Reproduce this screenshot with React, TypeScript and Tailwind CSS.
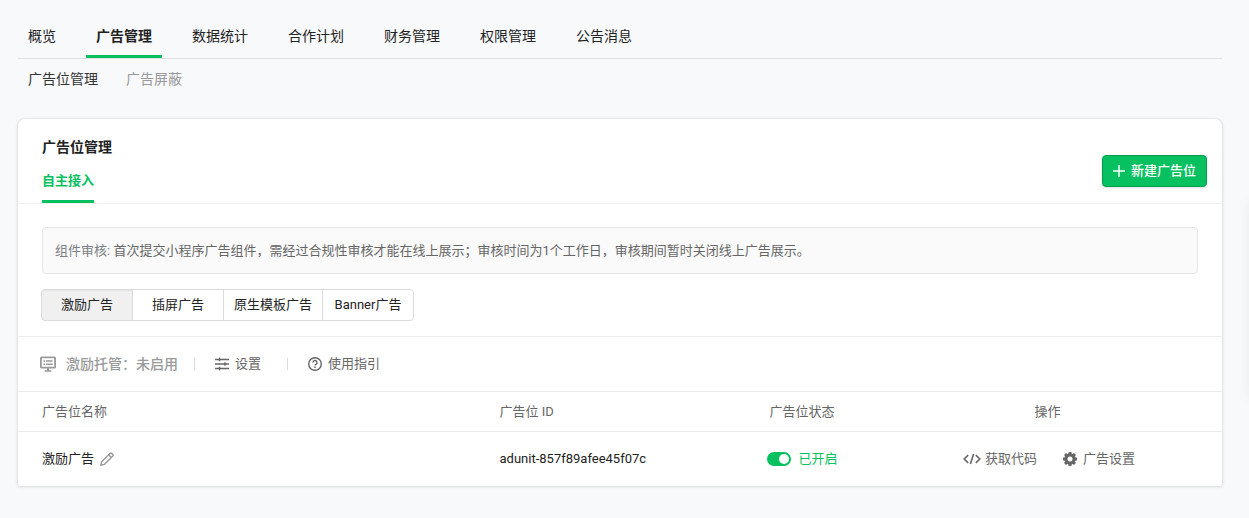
import React, { useState } from 'react';
import clsx from 'clsx';

const mainTabs = ['概览', '广告管理', '数据统计', '合作计划', '财务管理', '权限管理', '公告消息'];
const subTabs = ['广告位管理', '广告屏蔽'];
const adTypes = ['激励广告', '插屏广告', '原生模板广告', 'Banner广告'];

interface AdUnit {
  name: string;
  id: string;
  enabled: boolean;
}

const adUnits: AdUnit[] = [{ name: '激励广告', id: 'adunit-857f89afee45f07c', enabled: true }];

const PlusIcon = () => (
  <svg width="12" height="12" viewBox="0 0 12 12" fill="none" stroke="currentColor" strokeWidth="1.5" aria-hidden="true">
    <path d="M6 0v12M0 6h12" />
  </svg>
);

const BoardIcon = () => (
  <svg width="16" height="16" viewBox="0 0 16 16" fill="none" stroke="currentColor" strokeWidth="1.5" aria-hidden="true">
    <rect x="0.9" y="1.4" width="14.2" height="10.2" rx="0.6" strokeWidth="1.8" />
    <path d="M3.4 5h1.6M6 5h6.6M3.4 8.2h1.6M6 8.2h6.6M4.6 15h6.8" />
    <path d="M8 12v3" strokeWidth="2" />
  </svg>
);

const SlidersIcon = () => (
  <svg width="14" height="14" viewBox="0 0 14 14" fill="none" stroke="currentColor" strokeWidth="1.4" aria-hidden="true">
    <path d="M0 2.5h14M0 7h14M0 11.5h14M4.5 0.7v3.6M10 5.2v3.6M4.5 9.7v3.6" />
  </svg>
);

const HelpIcon = () => (
  <svg width="14" height="14" viewBox="0 0 14 14" fill="none" stroke="currentColor" strokeWidth="1.4" aria-hidden="true">
    <circle cx="7" cy="7" r="6.3" />
    <path d="M5 5.6a2 2 0 1 1 2.9 1.7c-.6.35-.9.6-.9 1.3" />
    <path d="M7 9.5v1.4" />
  </svg>
);

const PencilIcon = () => (
  <svg width="14" height="14" viewBox="0 0 14 14" fill="none" stroke="currentColor" strokeWidth="1.4" strokeLinejoin="round" aria-hidden="true">
    <path d="M0.8 13.2l.8-3.5 8.5-8.5q.7-.7 1.4 0l1.3 1.3q.7.7 0 1.4l-8.5 8.5z" />
    <path d="M8.6 2.7l2.7 2.7" />
  </svg>
);

const CodeIcon = () => (
  <svg width="18" height="12" viewBox="0 0 18 12" fill="none" stroke="currentColor" strokeWidth="1.6" aria-hidden="true">
    <path d="M5.2 2.2L1.2 6l4 3.8M12.8 2.2l4 3.8-4 3.8M10.6 1L7.4 11" />
  </svg>
);

const GearIcon = () => (
  <svg width="14" height="14" viewBox="0 0 14 14" aria-hidden="true">
    <circle cx="7" cy="7" r="4.1" fill="none" stroke="currentColor" strokeWidth="3.2" />
    <path
      d="M7 0v2.4M7 11.6V14M0 7h2.4M11.6 7H14M2.05 2.05l1.7 1.7M10.25 10.25l1.7 1.7M2.05 11.95l1.7-1.7M10.25 3.75l1.7-1.7"
      fill="none"
      stroke="currentColor"
      strokeWidth="3"
    />
  </svg>
);

const MainNav: React.FC = () => (
  <nav className="flex gap-5 border-b border-[#e0e2e4] pt-4">
    {mainTabs.map((tab, i) => (
      <a
        key={tab}
        href="#"
        className={clsx(
          'h-[42px] border-b-[3px] px-[10px] text-sm leading-10',
          i === 1 ? 'border-[#07c160] font-semibold' : 'border-transparent'
        )}
      >
        {tab}
      </a>
    ))}
  </nav>
);

const UnitRow: React.FC<{ unit: AdUnit }> = ({ unit }) => {
  const [enabled, setEnabled] = useState(unit.enabled);

  return (
    <tr className="h-[54px]">
      <td className="pl-6">
        <div className="flex items-center gap-[6px]">
          {unit.name}
          <button aria-label="编辑" className="text-[#9a9a9a]">
            <PencilIcon />
          </button>
        </div>
      </td>
      <td className="pl-6">{unit.id}</td>
      <td className="pl-[3px]">
        <label className="flex items-center justify-center gap-2 text-[#07c160]">
          <input
            type="checkbox"
            checked={enabled}
            onChange={(e) => setEnabled(e.target.checked)}
            className="h-[14px] w-6 appearance-none rounded-full bg-gray-300 p-[2px] before:block before:size-[10px] before:rounded-full before:bg-white checked:bg-[#07c160] checked:before:ml-[10px]"
          />
          {enabled ? '已开启' : '已关闭'}
        </label>
      </td>
      <td className="pl-[3px] text-[#666]">
        <div className="flex items-center justify-center gap-[26px]">
          <button className="flex items-center gap-1">
            <CodeIcon />
            获取代码
          </button>
          <button className="flex items-center gap-[6px]">
            <GearIcon />
            广告设置
          </button>
        </div>
      </td>
    </tr>
  );
};

export default function App() {
  const [adType, setAdType] = useState(0);

  return (
    <div className="min-h-screen overflow-hidden bg-[#f8f9fb] pr-[27px] pb-8 pl-[18px] font-[Roboto,'Noto_Sans_CJK_SC',sans-serif] text-[13px] text-[#222]">
      <MainNav />
      <div className="flex h-10 items-center gap-7 px-[10px] text-sm">
        {subTabs.map((tab, i) => (
          <a key={tab} href="#" className={i === 0 ? 'text-[#333]' : 'text-[#9a9a9a]'}>
            {tab}
          </a>
        ))}
      </div>

      <main className="-mx-px mt-[19px] rounded-lg rounded-b-xs border border-b-0 border-[#e7e8ea] bg-white shadow-sm">
        <header className="flex items-end justify-between border-b border-[#eee] pr-[15px] pl-6">
          <div>
            <h1 className="pt-[18px] text-sm font-semibold">广告位管理</h1>
            <div className="mt-[10px] flex">
              <a href="#" className="h-9 border-b-[3px] border-[#07c160] text-[13px] leading-7 font-semibold text-[#07c160]">
                自主接入
              </a>
            </div>
          </div>
          <button className="mb-4 flex h-8 items-center gap-[6px] rounded border border-[#069d4e] bg-[#07c160] px-[10px] font-medium text-white shadow-sm">
            <PlusIcon />
            新建广告位
          </button>
        </header>

        <section className="border-b border-[#eee] px-6 pt-[23px] pb-[15px]">
          <p className="rounded border border-[#e7e7e7] bg-[#fafafa] px-3 py-3 leading-[21px] text-[#666]">
            <span className="text-[#7c7f85]">组件审核: </span>
            首次提交小程序广告组件，需经过合规性审核才能在线上展示；审核时间为1个工作日，审核期间暂时关闭线上广告展示。
          </p>
          <div className="mt-[15px] -ml-px flex">
            {adTypes.map((type, i) => (
              <button
                key={type}
                onClick={() => setAdType(i)}
                className={clsx(
                  'h-8 min-w-[92px] border border-[#dadbdc] px-[10px] not-first:-ml-px first:rounded-l last:rounded-r',
                  i === adType ? 'bg-[#f0f0f0] inset-shadow-xs' : 'bg-white'
                )}
              >
                {type}
              </button>
            ))}
          </div>
        </section>

        <section className="flex h-[54px] items-center pl-[22px] text-[#666]">
          <div className="flex items-center gap-[10px] text-sm font-medium text-[#9a9a9a]">
            <BoardIcon />
            激励托管：未启用
          </div>
          <span className="mr-5 ml-4 h-3 border-l border-[#ddd]" />
          <button className="flex items-center gap-[6px]">
            <SlidersIcon />
            设置
          </button>
          <span className="mr-5 ml-[26px] h-3 border-l border-[#ddd]" />
          <a href="#" className="flex items-center gap-[6px]">
            <HelpIcon />
            使用指引
          </a>
        </section>

        <table className="w-full table-fixed">
          <thead>
            <tr className="h-10 border-y border-[#eaeaea] text-[#666]">
              <th className="w-[38%] pl-6 text-left font-normal">广告位名称</th>
              <th className="w-[21%] pl-6 text-left font-normal">广告位 ID</th>
              <th className="w-[12%] pl-[3px] font-normal">广告位状态</th>
              <th className="w-[29%] font-normal">操作</th>
            </tr>
          </thead>
          <tbody>
            {adUnits.map((unit) => (
              <UnitRow key={unit.id} unit={unit} />
            ))}
          </tbody>
        </table>
      </main>

      {/* collapsed side drawer, only its shadow shows at the window edge */}
      <aside className="fixed top-[200px] left-full h-[200px] w-10 shadow-[0_0_14px_rgba(0,0,0,0.06)]" />
    </div>
  );
}
